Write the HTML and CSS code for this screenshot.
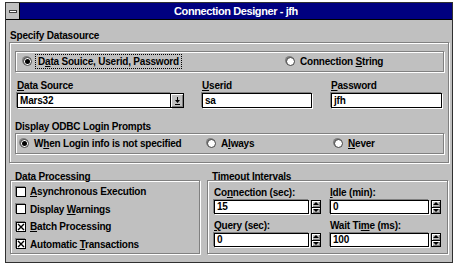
FILE: index.html
```html
<!DOCTYPE html>
<html lang="en">
<head>
  <meta charset="UTF-8">
  <title>Connection Designer - jfh</title>
  <link rel="stylesheet" href="styles.css">
</head>
<body>
  <div class="window">
    <div class="titlebar">
      <div class="sysmenu"><span class="sysbar"></span></div>
      <div class="title">Connection Designer - jfh</div>
    </div>

    <div class="content">
      <div class="section-label">Specify Datasource</div>
      <div class="group main-group">
        <div class="inner-box">
          <label class="radio-item ds-radio">
            <span class="radio checked"></span>
            <span class="focus">D<u>a</u>ta Souice, Userid, Password</span>
          </label>
          <label class="radio-item">
            <span class="radio"></span>
            <span>Connection <u>S</u>tring</span>
          </label>
        </div>

        <div class="fields">
          <div class="field ds-field">
            <div class="field-label"><u>D</u>ata Source</div>
            <div class="combo">
              <div class="textbox combo-text">Mars32</div>
              <div class="combo-btn">
                <svg width="7" height="8" viewBox="0 0 7 8"><path d="M3 0h1v3h2l-2.5 3L1 3h2z" fill="#000"/><rect x="1" y="7" width="5" height="1" fill="#000"/></svg>
              </div>
            </div>
          </div>
          <div class="field user-field">
            <div class="field-label"><u>U</u>serid</div>
            <div class="textbox">sa</div>
          </div>
          <div class="field pass-field">
            <div class="field-label"><u>P</u>assword</div>
            <div class="textbox">jfh</div>
          </div>
        </div>

        <div class="sub-label">Display ODBC Login Prompts</div>
        <div class="inner-box">
          <label class="radio-item when-radio">
            <span class="radio checked"></span>
            <span>W<u>h</u>en Login info is not specified</span>
          </label>
          <label class="radio-item always-radio">
            <span class="radio"></span>
            <span>A<u>l</u>ways</span>
          </label>
          <label class="radio-item">
            <span class="radio"></span>
            <span><u>N</u>ever</span>
          </label>
        </div>
      </div>

      <div class="bottom">
        <div class="processing">
          <div class="section-label small">Data Processing</div>
          <div class="group checks">
            <label class="check-item"><span class="checkbox"></span><span><u>A</u>synchronous Execution</span></label>
            <label class="check-item"><span class="checkbox"></span><span>Display <u>W</u>arnings</span></label>
            <label class="check-item">
              <span class="checkbox"><svg width="8" height="8" viewBox="0 0 8 8"><path d="M1 1l6 6M7 1l-6 6" stroke="#000" stroke-width="1.4"/></svg></span>
              <span><u>B</u>atch Processing</span>
            </label>
            <label class="check-item">
              <span class="checkbox"><svg width="8" height="8" viewBox="0 0 8 8"><path d="M1 1l6 6M7 1l-6 6" stroke="#000" stroke-width="1.4"/></svg></span>
              <span>Automatic <u>T</u>ransactions</span>
            </label>
          </div>
        </div>

        <div class="timeouts">
          <div class="section-label small">Timeout Intervals</div>
          <div class="group spin-grid">
            <div class="field">
              <div class="field-label">Co<u>n</u>nection (sec):</div>
              <div class="spin">
                <div class="textbox">15</div>
                <div class="spin-btn"><span class="up"></span><span class="dn"></span></div>
              </div>
            </div>
            <div class="field">
              <div class="field-label"><u>I</u>dle (min):</div>
              <div class="spin">
                <div class="textbox">0</div>
                <div class="spin-btn"><span class="up"></span><span class="dn"></span></div>
              </div>
            </div>
            <div class="field">
              <div class="field-label"><u>Q</u>uery (sec):</div>
              <div class="spin">
                <div class="textbox">0</div>
                <div class="spin-btn"><span class="up"></span><span class="dn"></span></div>
              </div>
            </div>
            <div class="field">
              <div class="field-label">Wait Ti<u>m</u>e (ms):</div>
              <div class="spin">
                <div class="textbox">100</div>
                <div class="spin-btn"><span class="up"></span><span class="dn"></span></div>
              </div>
            </div>
          </div>
        </div>
      </div>
    </div>
  </div>
</body>
</html>
```

FILE: styles.css
```css
* {
  box-sizing: border-box;
}

body {
  margin: 0;
  background-color: #ffffff;
  font-family: "Liberation Sans", Arial, sans-serif;
  font-size: 10px;
  font-weight: bold;
  letter-spacing: -0.2px;
  color: #000;
}

u {
  text-decoration-thickness: 1px;
  text-underline-offset: 1px;
}

.window {
  margin: 2px 0 0 5px;
  width: 448px;
  height: 261px;
  border: 1px solid #303030;
  background-color: #c0c0c0;
}

.titlebar {
  display: flex;
  height: 17px;
  border-bottom: 1px solid #000;
  background-color: #000080;
}

.sysmenu {
  width: 14px;
  display: flex;
  align-items: center;
  justify-content: center;
  background-color: #c0c0c0;
  border-right: 1px solid #000;
}

.sysbar {
  width: 8px;
  height: 3px;
  background-color: #fff;
  border: 1px solid #404040;
}

.title {
  flex: 1;
  text-align: center;
  color: #fff;
  font-size: 11px;
  letter-spacing: -0.4px;
  line-height: 16px;
}

.content {
  padding: 0 3px 0 3px;
}

.section-label {
  height: 22px;
  padding-top: 10px;
  line-height: 12px;
  padding-left: 1px;
}

.section-label.small {
  height: 17px;
  padding-top: 8px;
  padding-left: 5px;
}

.group {
  border: 1px solid #808080;
  box-shadow: inset 1px 1px 0 #fff, 1px 1px 0 #fff;
}

.main-group {
  height: 121px;
  padding: 8px 4px 0 5px;
}

.inner-box {
  display: flex;
  align-items: center;
  height: 21px;
  border: 1px solid #808080;
  box-shadow: inset 1px 1px 0 #fff, 1px 1px 0 #fff;
}

.radio-item {
  display: flex;
  align-items: center;
  gap: 5px;
}

.ds-radio {
  margin-left: 7px;
  width: 263px;
}

.when-radio {
  margin-left: 4px;
  width: 187px;
}

.always-radio {
  width: 127px;
}

.radio {
  width: 9px;
  height: 9px;
  border-radius: 50%;
  border: 1px solid #404040;
  background-color: #fff;
  box-shadow: -1px -1px 0 #808080;
  display: flex;
  align-items: center;
  justify-content: center;
}

.radio.checked::after {
  content: "";
  width: 5px;
  height: 5px;
  border-radius: 50%;
  background-color: #000;
}

.focus {
  outline: 1px dotted #000;
  outline-offset: 1px;
  padding: 0 1px;
}

.fields {
  display: flex;
  margin-top: 8px;
}

.field-label {
  height: 13px;
  line-height: 12px;
}

.textbox {
  height: 15px;
  line-height: 13px;
  padding-left: 2px;
  background-color: #fff;
  border: 1px solid #000;
  box-shadow: -1px -1px 0 #808080, 1px 1px 0 #fff;
}

.ds-field {
  width: 167px;
  margin-left: 2px;
}

.combo {
  display: flex;
}

.combo-text {
  flex: 1;
}

.combo-btn {
  width: 13px;
  height: 15px;
  border: 1px solid #000;
  border-left: none;
  background-color: #c0c0c0;
  box-shadow: inset 1px 1px 0 #fff, inset -1px -1px 0 #808080;
  display: flex;
  align-items: center;
  justify-content: center;
}

.user-field {
  width: 110px;
  margin-left: 18px;
}

.pass-field {
  width: 111px;
  margin-left: 19px;
}

.sub-label {
  height: 12px;
  line-height: 12px;
  margin-top: 13px;
}

.bottom {
  display: flex;
}

.processing {
  width: 190px;
  margin-left: 1px;
}

.timeouts {
  width: 241px;
  margin-left: 7px;
}

.checks {
  height: 74px;
  padding: 2px 0 0 5px;
  display: flex;
  flex-direction: column;
}

.check-item {
  display: flex;
  align-items: center;
  gap: 4px;
  height: 18px;
}

.checkbox {
  width: 10px;
  height: 10px;
  border: 1px solid #000;
  background-color: #fff;
  box-shadow: -1px -1px 0 #808080;
  display: flex;
}

.spin-grid {
  height: 74px;
  padding: 6px 6px 0 6px;
  display: grid;
  grid-template-columns: 107px 111px;
  column-gap: 9px;
  row-gap: 6px;
  align-content: start;
}

.spin {
  display: flex;
  gap: 2px;
}

.spin .textbox {
  flex: 1;
  height: 14px;
  line-height: 12px;
}

.spin-btn {
  width: 10px;
  height: 14px;
  border: 1px solid #000;
  background-color: #c0c0c0;
  display: flex;
  flex-direction: column;
}

.spin-btn span {
  flex: 1;
  display: flex;
  align-items: center;
  justify-content: center;
  box-shadow: inset 1px 1px 0 #fff, inset -1px -1px 0 #808080;
}

.spin-btn .up {
  border-bottom: 1px solid #000;
}

.spin-btn .up::after {
  content: "";
  border-left: 3px solid transparent;
  border-right: 3px solid transparent;
  border-bottom: 3px solid #000;
}

.spin-btn .dn::after {
  content: "";
  border-left: 3px solid transparent;
  border-right: 3px solid transparent;
  border-top: 3px solid #000;
}
```
